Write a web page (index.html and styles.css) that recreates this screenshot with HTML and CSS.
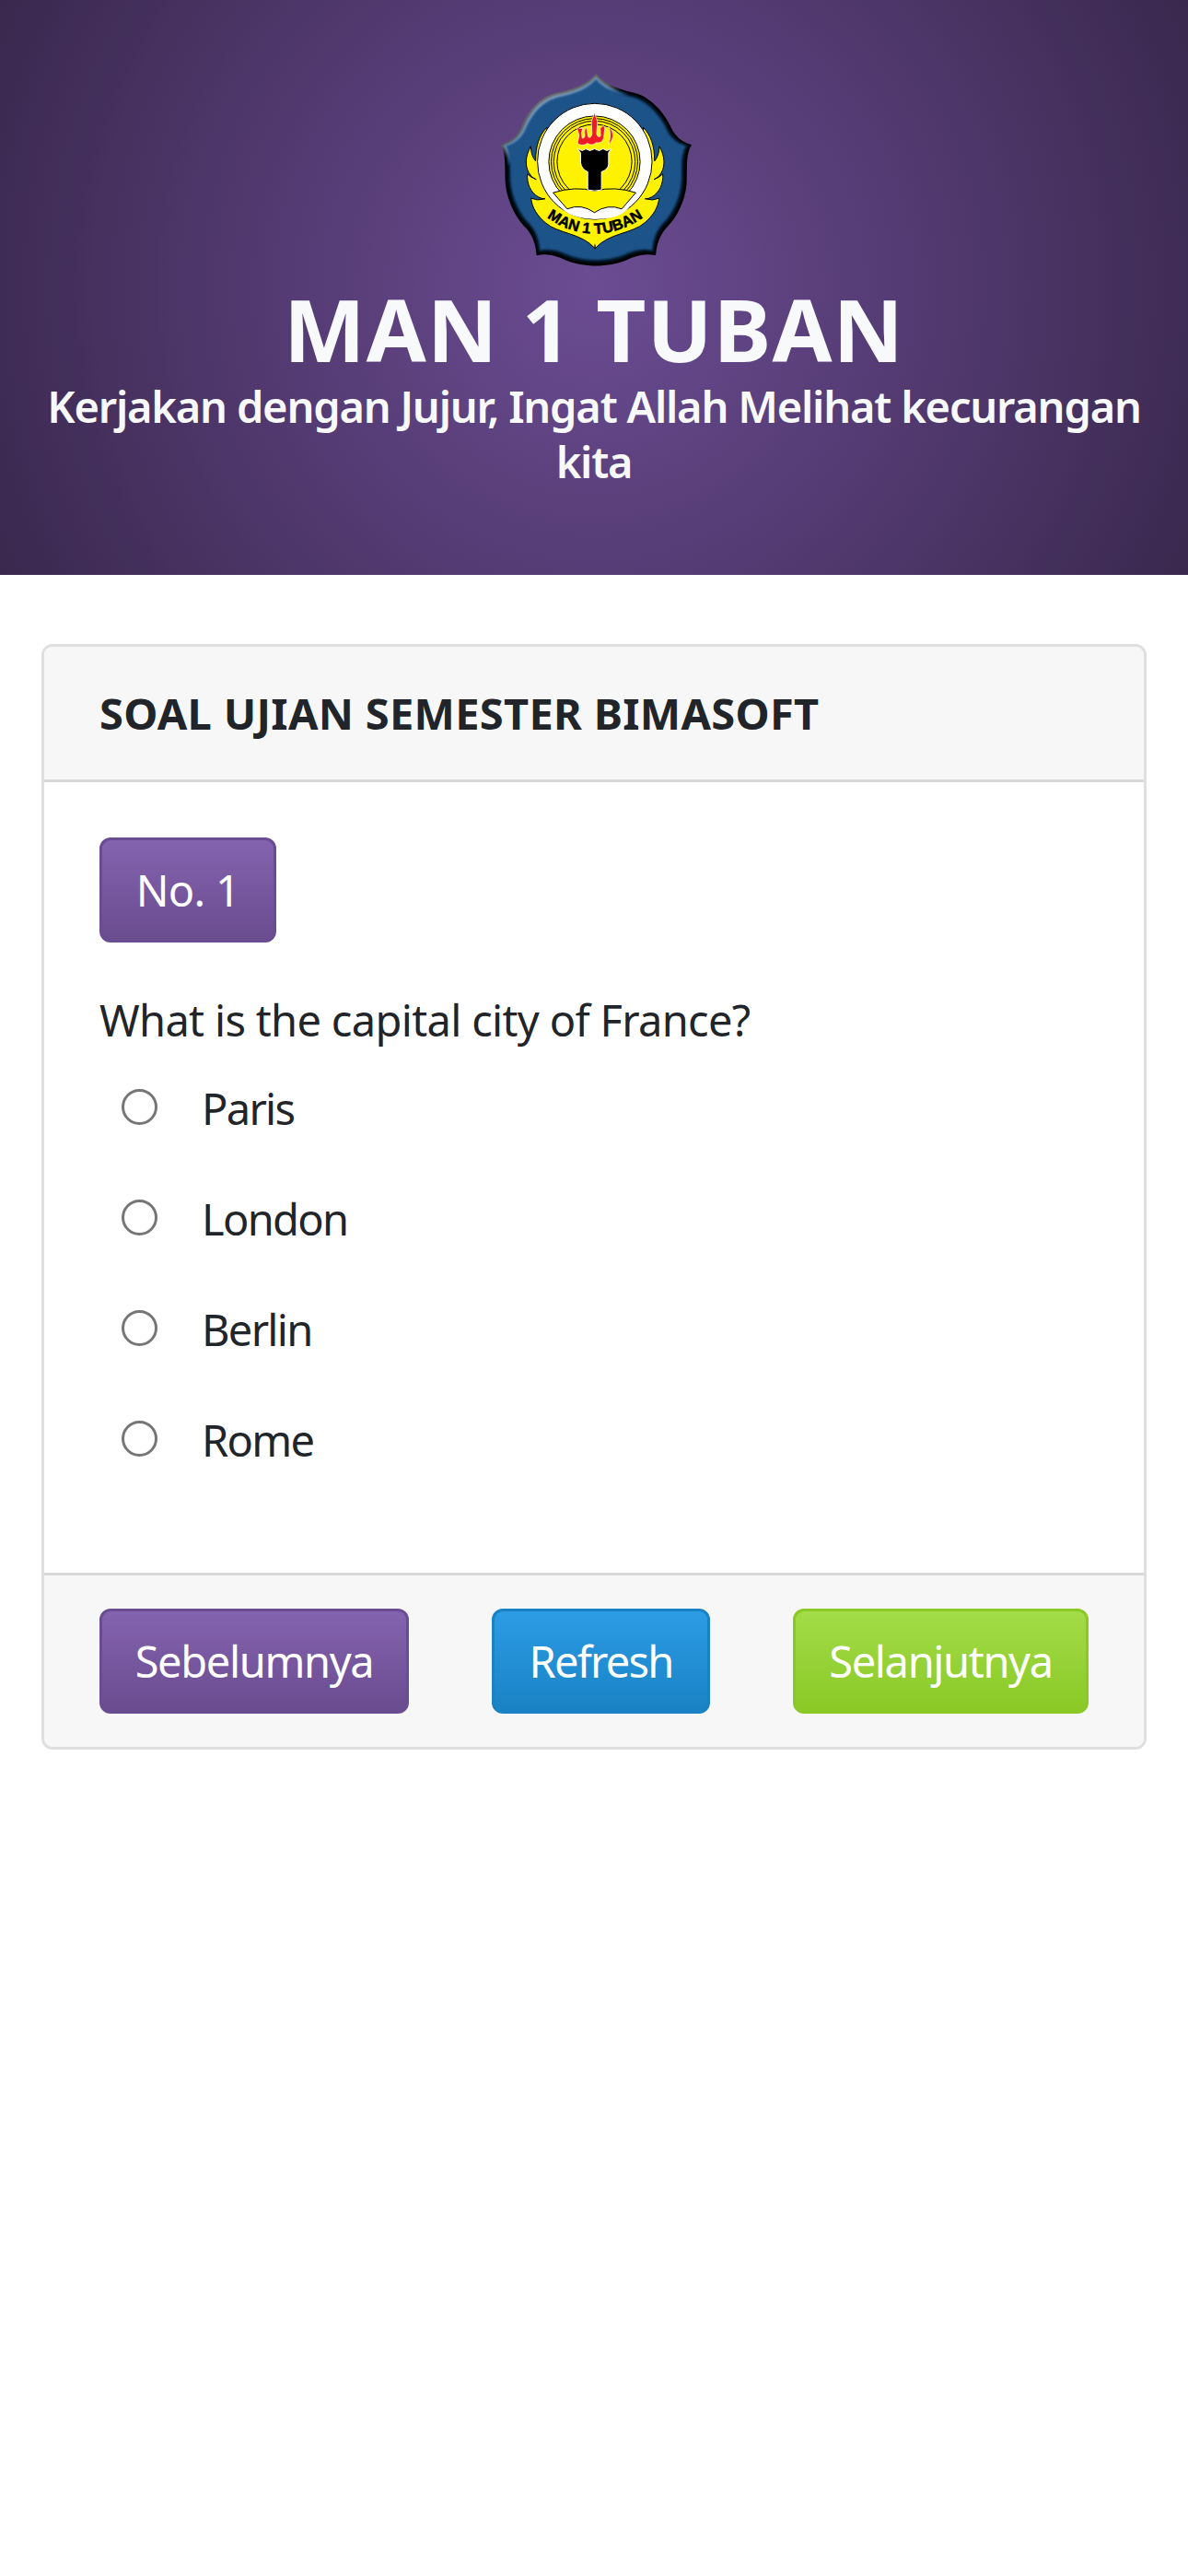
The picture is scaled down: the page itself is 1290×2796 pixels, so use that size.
FILE: index.html
```
<!DOCTYPE html>
<html lang="id">
<head>
    <meta charset="UTF-8">
    <meta name="viewport" content="width=device-width, initial-scale=1.0">
    <title>MAN 1 TUBAN</title>
    <link rel="stylesheet" href="styles.css">
</head>
<body>
    <header class="header">
        <svg class="logo" viewBox="25 24 640 640" role="img" aria-label="Logo">
            <defs>
                <linearGradient id="edge" x1="0" y1="0" x2="0.2" y2="0.34">
                    <stop offset="0.5" stop-color="#6c6c6c"/>
                    <stop offset="0.85" stop-color="#555"/>
                    <stop offset="1" stop-color="#000"/>
                </linearGradient>
                <linearGradient id="bevel" x1="0" y1="0" x2="0.22" y2="0.37">
                    <stop offset="0.5" stop-color="#86a8ca"/>
                    <stop offset="0.8" stop-color="#6f97bf"/>
                    <stop offset="0.95" stop-color="#1c4a78"/>
                    <stop offset="1" stop-color="#03182c"/>
                </linearGradient>
                <filter id="soft"><feGaussianBlur stdDeviation="3"/></filter>
                <path id="shield" d="M350 30C320 67 270 82 215 94C155 112 125 160 104 207C90 236 68 253 38 262C57 292 52 330 54 382C59 448 92 505 122 533C145 559 154 590 156 623C190 615 220 623 250 638C310 663 390 663 450 638C480 623 510 615 545 623C547 590 556 559 579 533C609 505 643 448 646 382C648 330 643 292 662 262C632 253 610 236 596 207C575 160 530 108 480 94C430 82 380 67 350 30Z"/>
                <path id="wing" d="M190 205C165 230 153 265 153 315C143 304 138 287 137 267C119 300 118 330 131 353Q138 368 155 375Q138 369 126 357C124 389 137 418 162 432Q172 438 184 438Q158 446 138 436C141 468 160 495 185 516C225 552 303 549 347 600L347 460L190 400Z"/>
                <path id="arc" d="M186 496Q345 608 508 496"/>
            </defs>
            <use href="#shield" fill="url(#edge)"/>
            <use href="#shield" fill="url(#bevel)" filter="url(#soft)" transform="translate(11 10) scale(.968)"/>
            <use href="#shield" fill="#1c5388" filter="url(#soft)" transform="translate(20 19) scale(.942)"/>
            <g fill="#fff200" stroke="#000" stroke-width="3">
                <use href="#wing"/>
                <use href="#wing" transform="translate(694 0) scale(-1 1)"/>
            </g>
            <path d="M300 495H395L347 590Z" fill="#fff200"/>
            <ellipse cx="346" cy="316" rx="187" ry="189" fill="#fff" stroke="#000" stroke-width="3"/>
            <g fill="#fff200" stroke="#000" stroke-width="3">
                <circle cx="345" cy="317" r="149"/>
                <circle cx="345" cy="317" r="141"/>
                <circle cx="345" cy="317" r="133"/>
                <circle cx="345" cy="317" r="122"/>
            </g>
            <path d="M224 440L256 471Q302 452 345 483Q388 453 434 471L468 440Q455 505 346 504Q236 500 224 440Z" fill="#fff"/>
            <path d="M210 418Q282 396 345 412Q410 396 480 418L434 471Q388 453 345 483Q302 452 256 471Z" fill="#fff200" stroke="#000" stroke-width="3"/>
            <path d="M290 274L305 281L317 275L330 281L345 275L360 281L373 275L386 281L400 274L391 288V326Q390 342 368 350V409Q345 415 323 409V350Q302 341 300 320V289Z" fill="#000" stroke="#fff" stroke-width="3"/>
            <g fill="#ed1c24" stroke="#fff" stroke-width="2">
                <path d="M286 203Q297 212 308 207Q299 222 305 240Q316 242 313 224Q310 214 319 205L324 235Q332 244 337 227L335 187L345 157L355 187L352 226Q356 241 365 233L364 208L374 199L379 207L375 240Q370 258 350 255Q337 267 322 257Q304 269 290 257L295 230Z"/>
                <path d="M391 203Q421 230 391 262Q402 228 391 203Z"/>
            </g>
            <text class="logo-text"><textPath href="#arc" startOffset="50%" text-anchor="middle">MAN 1 TUBAN</textPath></text>
        </svg>
        <h1 class="school">MAN 1 TUBAN</h1>
        <p class="motto">Kerjakan dengan Jujur, Ingat Allah Melihat kecurangan kita</p>
    </header>

    <main class="card">
        <div class="card-header">SOAL UJIAN SEMESTER BIMASOFT</div>
        <div class="card-body">
            <button class="btn btn-primary btn-number">No. 1</button>
            <p class="question">What is the capital city of France?</p>
            <label class="option"><input type="radio" name="answer"><span>Paris</span></label>
            <label class="option"><input type="radio" name="answer"><span>London</span></label>
            <label class="option"><input type="radio" name="answer"><span>Berlin</span></label>
            <label class="option"><input type="radio" name="answer"><span>Rome</span></label>
        </div>
        <div class="card-footer">
            <button class="btn btn-primary btn-prev">Sebelumnya</button>
            <button class="btn btn-info btn-refresh">Refresh</button>
            <button class="btn btn-success btn-next">Selanjutnya</button>
        </div>
    </main>
</body>
</html>
```
FILE: styles.css
```
* {
    box-sizing: border-box;
}
body {
    margin: 0;
    background-color: #fff;
    color: #212529;
    font-family: "Noto Sans", "Open Sans", sans-serif;
    font-size: 47px;
    line-height: 72px;
}
.header {
    height: 624px;
    padding: 78px 45px 0;
    color: #f8f9fa;
    text-align: center;
    background: radial-gradient(circle, #6b4c93, #3a284e);
}
.logo {
    display: block;
    width: 213px;
    height: 213px;
    margin: 0 auto;
}
.logo-text {
    font-family: "Liberation Sans", Arial, sans-serif;
    font-weight: bold;
    font-size: 49px;
    stroke: #000;
    stroke-width: 1.5px;
}
.school {
    margin: 9px 0 0;
    font-size: 94px;
    font-weight: 700;
    line-height: 115px;
    letter-spacing: 1.1px;
}
.motto {
    margin: -4px 0 0;
    font-weight: 600;
    line-height: 60px;
    letter-spacing: -1.2px;
}
.card {
    margin: 75px 45px 0;
    border: 3px solid #dfdfdf;
    border-radius: 12px;
    overflow: hidden;
}
.card-header {
    height: 147px;
    padding: 36px 60px;
    font-weight: 700;
    letter-spacing: 0.3px;
    background-color: #f7f7f7;
    border-bottom: 3px solid #d8d8d8;
}
.card-body {
    height: 858px;
    padding: 60px;
}
.card-footer {
    display: flex;
    justify-content: space-between;
    padding: 36px 60px;
    background-color: #f7f7f7;
    border-top: 3px solid #d8d8d8;
}
.btn {
    display: block;
    height: 114px;
    padding: 0;
    border: 3px solid;
    border-radius: 12px;
    color: #fff;
    font: inherit;
    letter-spacing: -1.35px;
    white-space: nowrap;
}
.btn-primary {
    background: linear-gradient(#8463ae, #6a4c90);
    border-color: #694c92;
}
.btn-info {
    background: linear-gradient(#2c9ce5, #1982c4);
    border-color: #1982c4;
}
.btn-success {
    background: linear-gradient(#a2dc48, #8ac926);
    border-color: #8ac926;
}
.btn-number {
    width: 192px;
    letter-spacing: -0.7px;
}
.btn-prev {
    width: 336px;
}
.btn-refresh {
    width: 237px;
    letter-spacing: -1.8px;
}
.btn-next {
    width: 321px;
}
.question {
    margin: 48px 0 23px;
    letter-spacing: -0.67px;
}
.option {
    display: flex;
    align-items: flex-start;
    height: 120px;
    padding-left: 24px;
    letter-spacing: -1.7px;
}
.option input {
    appearance: none;
    width: 39px;
    height: 39px;
    margin: 16px 48px 0 0;
    border: 3px solid #767676;
    border-radius: 50%;
    background-color: #fff;
}
.option span {
    padding-top: 1px;
}
```
